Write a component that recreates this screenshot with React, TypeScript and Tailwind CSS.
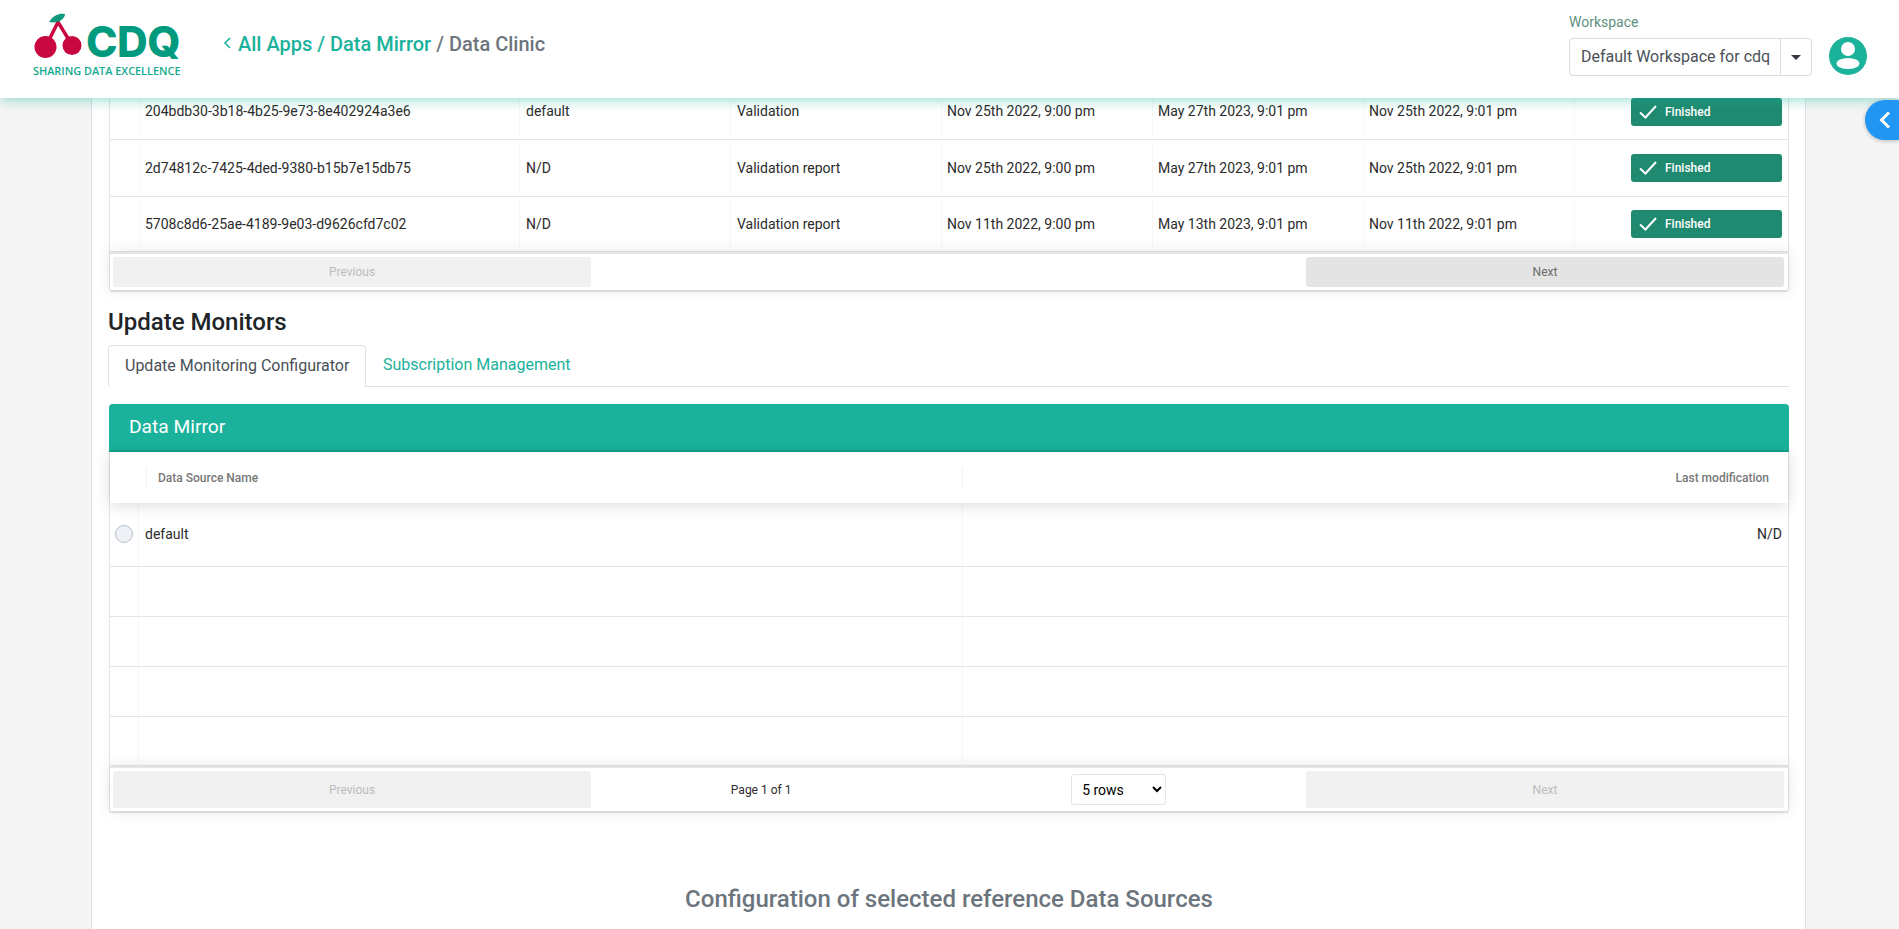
const topRows = [
  { id: "204bdb30-3b18-4b25-9e73-8e402924a3e6", source: "default", type: "Validation", a: "Nov 25th 2022, 9:00 pm", b: "May 27th 2023, 9:01 pm", c: "Nov 25th 2022, 9:01 pm", h: "h-[56px]" },
  { id: "2d74812c-7425-4ded-9380-b15b7e15db75", source: "N/D", type: "Validation report", a: "Nov 25th 2022, 9:00 pm", b: "May 27th 2023, 9:01 pm", c: "Nov 25th 2022, 9:01 pm", h: "h-[57px]" },
  { id: "5708c8d6-25ae-4189-9e03-d9626cfd7c02", source: "N/D", type: "Validation report", a: "Nov 11th 2022, 9:00 pm", b: "May 13th 2023, 9:01 pm", c: "Nov 11th 2022, 9:01 pm", h: "h-[55px]" },
];

const emptyRows = ["h-[50px]", "h-[50px]", "h-[50px]", "h-[49px]"];

const Logo = () => (
  <div className="relative w-[150px] h-[64px] shrink-0">
    <svg width="60" height="50" viewBox="0 0 60 50" className="absolute left-0 top-0">
      <path d="M15 30 L25 10 L36 28" fill="none" stroke="#c8063f" strokeWidth="3.5" />
      <circle cx="12.5" cy="35" r="11" fill="#c8063f" />
      <circle cx="39" cy="33.5" r="9.5" fill="#c8063f" />
      <path d="M16 10 C20 3 27 1 32 2 C32 7 25 12 16 10 Z" fill="#12997d" />
    </svg>
    <span className="absolute left-[53px] top-[12px] text-[42.5px] leading-[36px] font-extrabold tracking-[-0.5px] text-[#009b7f] font-['Inter',sans-serif]">
      CDQ
    </span>
    <span className="absolute left-0 top-[52px] text-[10.9px] leading-[14px] font-semibold whitespace-nowrap text-[#14a98f] font-['Open_Sans',sans-serif]">
      SHARING DATA EXCELLENCE
    </span>
  </div>
);

const Cell = ({ className, children }: { className: string; children?: React.ReactNode }) => (
  <div className={`h-[46px] self-center flex items-center border-r border-r-black/[0.03] text-[14px] text-[#2b2b2b] ${className}`}>
    {children}
  </div>
);

const PageButton = ({ label, active, tall }: { label: string; active?: boolean; tall?: boolean }) => (
  <button
    className={`w-[478px] rounded-[3px] text-[12px] ${tall ? "h-[37px]" : "h-[30px]"} ${
      active ? "bg-[#e4e4e4] text-[#6a6a6a]" : "bg-[#f1f1f1] text-[#bcbcbc]"
    }`}
  >
    {label}
  </button>
);

const App = () => {
  return (
    <div className="relative h-[929px] overflow-hidden bg-[#f5f5f5] font-['Roboto',sans-serif]">
      <header className="relative z-10 h-[98px] bg-white flex shadow-[0_2px_12px_rgba(26,178,155,0.45)]">
        <div className="ml-[33px] mt-[12px]">
          <Logo />
        </div>
        <div className="ml-[40px] mt-[31px] h-[26px] flex items-center text-[20px] font-medium whitespace-nowrap">
          <svg width="9" height="12" viewBox="0 0 9 12" className="mr-[6px] mb-[3px]">
            <path d="M7 1 L2 6 L7 11" fill="none" stroke="#1ab29b" strokeWidth="1.6" />
          </svg>
          <span className="text-[#1ab29b]">All Apps / Data Mirror</span>
          <span className="text-[#6c757d]">&nbsp;/ Data Clinic</span>
        </div>
        <div className="ml-auto mr-[32px] mt-[13px] flex items-start">
          <div className="w-[243px]">
            <div className="h-[18px] text-[14px] leading-[18px] text-[#5f8f80]">Workspace</div>
            <div className="mt-[7px] h-[38px] flex items-center border border-[#dcdcdc] rounded-[4px] bg-white">
              <div className="w-[210px] pl-[11px] text-[16px] text-[#495057] whitespace-nowrap">Default Workspace for cdq</div>
              <div className="flex-1 h-full border-l border-l-[#dcdcdc] flex items-center justify-center">
                <div className="w-0 h-0 border-x-[5px] border-x-transparent border-t-[5px] border-t-[#343a40]" />
              </div>
            </div>
          </div>
          <div className="ml-[17px] mt-[24px] w-[38px] h-[38px] rounded-full bg-[#1ab29b] overflow-hidden">
            <svg width="38" height="38" viewBox="0 0 38 38">
              <circle cx="19" cy="12" r="7" fill="white" />
              <ellipse cx="19" cy="26.5" rx="11.5" ry="5.5" fill="white" />
            </svg>
          </div>
        </div>
      </header>

      {/* page is scrolled: first table row sits partly under the header */}
      <main className="ml-[91px] w-[1715px] h-[831px] overflow-hidden bg-white border-x border-x-[#dedfe3] pl-[17px] pr-[16px]">
        <div className="-mt-[15px] border border-black/10 shadow-[0_1px_1px_rgba(0,0,0,0.12)] rounded-b-[3px]">
          {topRows.map((r) => (
            <div key={r.id} className={`${r.h} flex items-stretch border-b border-b-black/10 last:border-b-0`}>
              <Cell className="w-[30px]" />
              <Cell className="w-[380px] pl-[5px]">{r.id}</Cell>
              <Cell className="w-[211px] pl-[6px]">{r.source}</Cell>
              <Cell className="w-[211px] pl-[6px]">{r.type}</Cell>
              <Cell className="w-[211px] pl-[5px]">{r.a}</Cell>
              <Cell className="w-[211px] pl-[5px]">{r.b}</Cell>
              <Cell className="w-[211px] pl-[5px]">{r.c}</Cell>
              <div className="flex-1 flex items-center justify-end pr-[6px]">
                <div className="w-[151px] h-[28px] rounded-[3px] bg-[#1f8a70] flex items-center text-white text-[12px] font-medium">
                  <svg width="18" height="14" viewBox="0 0 18 14" className="ml-[8px] mr-[8px]">
                    <path d="M1 7.5 L6.5 12.5 L17 1" fill="none" stroke="white" strokeWidth="2" />
                  </svg>
                  Finished
                </div>
              </div>
            </div>
          ))}
          <div className="h-[38px] pl-[3px] pr-[4px] pt-[3px] flex justify-between border-t-2 border-t-black/10 shadow-[0_0_15px_rgba(0,0,0,0.1)]">
            <PageButton label="Previous" />
            <PageButton label="Next" active />
          </div>
        </div>

        <h2 className="-ml-px mt-[16px] h-[30px] text-[24px] leading-[30px] font-medium text-[#212529]">Update Monitors</h2>

        <div className="-ml-px mt-[8px] h-[42px] flex border-b border-b-[#dee2e6]">
          <div className="w-[258px] h-[42px] border border-[#dee2e6] border-b-white rounded-t-[4px] bg-white pl-[16px] text-[16px] leading-[39px] text-[#495057]">
            Update Monitoring Configurator
          </div>
          <div className="pl-[17px] text-[16px] leading-[39px] text-[#1ab29b]">Subscription Management</div>
        </div>

        <div className="mt-[17px] border border-black/10 rounded-[3px] shadow-[0_1px_1px_rgba(0,0,0,0.12)]">
          <div className="-mx-px -mt-px h-[48px] bg-[#1ab29b] border-b-2 border-b-[#14a18b] rounded-t-[4px] pl-[20px] text-[19.2px] leading-[46px] text-white">
            Data Mirror
          </div>
          <div className="relative z-[1] h-[51px] flex items-center bg-white shadow-[0_2px_15px_rgba(0,0,0,0.15)] text-[12px] font-medium text-[#777777]">
            <div className="w-[37px] h-[20px] border-r border-r-black/5" />
            <div className="w-[816px] h-[20px] pl-[11px] leading-[20px] border-r border-r-black/5">Data Source Name</div>
            <div className="flex-1 pr-[19px] text-right">Last modification</div>
          </div>
          <div className="h-[64px] flex border-b border-b-black/10">
            <div className="w-[29px] h-full border-r border-r-black/[0.03] flex items-center pl-[5px]">
              <div className="w-[18px] h-[18px] rounded-full bg-[#eef1f6] border border-[#b8c2cc] -mt-[1px]" />
            </div>
            <div className="w-[824px] h-full border-r border-r-black/[0.03] pl-[6px] flex items-center text-[14px] text-[#2b2b2b]">default</div>
            <div className="flex-1 h-full pr-[6px] flex items-center justify-end text-[14px] text-[#2b2b2b]">N/D</div>
          </div>
          {emptyRows.map((h, i) => (
            <div key={i} className={`${h} flex border-b border-b-black/10`}>
              <div className="w-[29px] h-full border-r border-r-black/[0.03]" />
              <div className="w-[824px] h-full border-r border-r-black/[0.03]" />
            </div>
          ))}
          <div className="h-[45px] pl-[3px] pr-[4px] flex items-center border-t-2 border-t-black/10 shadow-[0_0_15px_rgba(0,0,0,0.1)]">
            <PageButton label="Previous" tall />
            <div className="flex-1 flex items-center justify-around text-[12px] text-[#2b2b2b]">
              <span>Page 1 of 1</span>
              <select className="w-[95px] h-[31px] pl-[6px] bg-white border border-black/10 rounded-[3px] text-[14px] text-black">
                <option>5 rows</option>
              </select>
            </div>
            <PageButton label="Next" tall />
          </div>
        </div>

        <h4 className="mt-[73px] text-center text-[24px] leading-[29px] font-medium text-[#6c757d]">
          Configuration of selected reference Data Sources
        </h4>
      </main>

      <button className="absolute z-20 right-0 top-[100px] w-[34px] h-[40px] rounded-l-[20px] bg-[#2196f3] shadow-[0_1px_4px_rgba(0,0,0,0.25)] flex items-center pl-[14px]">
        <svg width="12" height="18" viewBox="0 0 12 18">
          <path d="M10 1.5 L2.5 9 L10 16.5" fill="none" stroke="white" strokeWidth="3" />
        </svg>
      </button>
    </div>
  );
};

export default App;
